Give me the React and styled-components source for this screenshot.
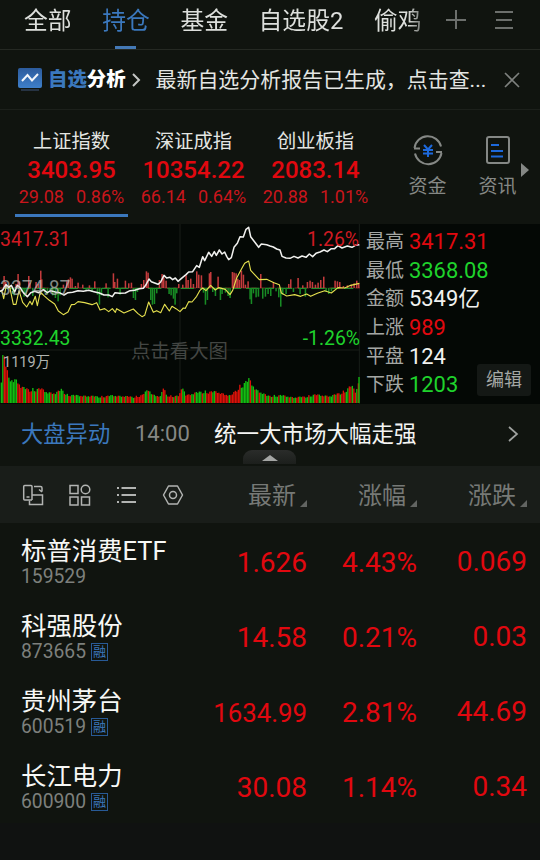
import React, { useState } from "react";
import styled, { createGlobalStyle } from "styled-components";

const RED = "#e1080f";
const GREEN = "#1fd32c";
const BLUE = "#3b78bd";

const GlobalStyle = createGlobalStyle`
  * {
    box-sizing: border-box;
  }
  body {
    margin: 0;
    background: #10140f;
    color: #e4e6e3;
    font-family: Roboto, "Noto Sans CJK SC", sans-serif;
  }
`;

const Page = styled.div`
  display: flex;
  flex-direction: column;
  width: 540px;
  height: 860px;
  overflow: hidden;
  background: #10140f;
`;

const TabBar = styled.div`
  display: flex;
  align-items: flex-start;
  height: 50px;
  padding-left: 24px;
  border-bottom: 1px solid #252923;
`;

const TabList = styled.div`
  display: flex;
  gap: 30.6px;
  width: 400px;
  height: 49px;
  mask-image: linear-gradient(to right, #000 384px, rgba(0, 0, 0, 0.5) 397px);
`;

const Tab = styled.div`
  display: flex;
  flex-direction: column;
  align-items: center;
  justify-content: space-between;
  flex: none;
  padding-top: 4px;
  font-size: 23.8px;
  line-height: 35px;
  color: ${(p) => (p.$active ? BLUE : "#dddfdc")};

  &::after {
    content: "";
    width: 21px;
    height: 3px;
    background: ${(p) => (p.$active ? "#4479b5" : "transparent")};
  }
`;

const TabIcons = styled.div`
  display: flex;
  gap: 28px;
  padding: 9px 0 0 22px;
`;

const Banner = styled.div`
  display: flex;
  align-items: center;
  height: 60px;
  padding: 0 19px 0 18px;
  border-bottom: 1px solid #1c201b;
`;

const BannerTitle = styled.div`
  margin: 0 5px 0 6px;
  font-size: 19.4px;
  font-weight: 900;
  line-height: 30px;
  color: #fff;

  span {
    color: ${BLUE};
  }
`;

const BannerText = styled.div`
  flex: 1;
  margin-left: 15px;
  font-size: 20.95px;
  line-height: 30px;
  white-space: nowrap;
`;

const IndexStrip = styled.div`
  display: flex;
  height: 114px;
  padding-left: 15px;
`;

const IndexCard = styled.div`
  display: flex;
  flex-direction: column;
  align-items: center;
  width: 113px;
  height: 107px;
  margin-right: 9px;
  padding-top: 18px;
  border-bottom: 3px solid ${(p) => (p.$active ? BLUE : "transparent")};
`;

const IndexName = styled.div`
  font-size: 19.3px;
  line-height: 28px;
`;

const IndexPrice = styled.div`
  font-size: 24px;
  font-weight: 500;
  line-height: 28px;
  color: ${RED};
`;

const IndexChange = styled.div`
  display: flex;
  gap: 12px;
  font-size: 18px;
  line-height: 26px;
  color: #c9161c;
`;

const Shortcut = styled.div`
  display: flex;
  flex-direction: column;
  align-items: center;
  flex: none;
  width: ${(p) => p.$width}px;
  padding-top: 23px;
  font-size: 19px;
  line-height: 39px;
  color: #858885;
  white-space: nowrap;
`;

const MoreArrow = styled.div`
  align-self: flex-start;
  margin-top: 53px;
  border: 7px solid transparent;
  border-right: 0;
  border-left: 8px solid #858885;
`;

const Market = styled.div`
  display: grid;
  grid-template-columns: 360px 1fr;
  height: 180px;
  background: #040805;
`;

const Chart = styled.div`
  position: relative;
  height: 180px;

  svg {
    display: block;
  }
`;

const ChartLabel = styled.span`
  position: absolute;
  top: ${(p) => p.$top}px;
  left: ${(p) => p.$left ?? "auto"};
  right: ${(p) => p.$right ?? "auto"};
  font-size: ${(p) => p.$size || 19.4}px;
  line-height: 24px;
  color: ${(p) => p.$color};
  white-space: nowrap;
`;

const Stats = styled.div`
  position: relative;
  display: flex;
  flex-direction: column;
  padding: 4px 0 0 6px;
`;

const Stat = styled.div`
  display: flex;
  align-items: center;
  gap: 5px;
  height: 28.6px;
  font-size: 19px;
  line-height: 26px;
  color: #a4a7a4;

  b {
    font-size: 21.9px;
    font-weight: 400;
    line-height: 28px;
    color: ${(p) => p.$color || "#f0f1ef"};
  }
`;

const EditButton = styled.button`
  position: absolute;
  right: 9px;
  bottom: 8px;
  width: 54px;
  height: 32px;
  padding: 0;
  border: 0;
  border-radius: 3px;
  background: #141815;
  color: #a4a7a4;
  font: 18px/30px Roboto, "Noto Sans CJK SC", sans-serif;
`;

const News = styled.div`
  position: relative;
  display: flex;
  align-items: center;
  height: 62px;
  padding: 0 21px 3px 21px;
  font-size: 22.5px;
  line-height: 32px;
`;

const NewsTopic = styled.span`
  width: 114px;
  font-size: 22.3px;
  color: ${BLUE};
`;

const NewsTime = styled.span`
  width: 79px;
  font-size: 22px;
  color: #858885;
`;

const NewsTitle = styled.span`
  flex: 1;
  color: #f4f5f3;
`;

const Handle = styled.div`
  position: absolute;
  bottom: 2px;
  left: 243px;
  display: flex;
  justify-content: center;
  width: 53px;
  height: 14px;
  padding-top: 5px;
  border-radius: 9px 9px 0 0;
  background: linear-gradient(#2a2c2a, #1c1f1c);

  &::after {
    content: "";
    height: 0;
    border: 8px solid transparent;
    border-top: 0;
    border-bottom: 6px solid #a4a6a4;
  }
`;

const TableHead = styled.div`
  display: flex;
  align-items: center;
  height: 57px;
  padding-left: 21px;
  background: #191d19;
`;

const ViewIcons = styled.div`
  display: flex;
  align-items: center;
  flex: none;
  gap: 22.5px;
  width: 227px;
`;

const SortHeader = styled.div`
  display: flex;
  align-items: center;
  flex: none;
  gap: 4px;
  width: 110px;
  padding-top: 3px;
  font-size: 24px;
  line-height: 34px;
  color: #767976;

  &::after {
    content: "";
    margin-top: 14px;
    border-left: 7px solid transparent;
    border-bottom: 7px solid #626562;
  }
`;

const Row = styled.div`
  display: grid;
  grid-template-columns: 165px 121px 110px 110px;
  height: 75px;
  padding: 8px 0 0 21px;
`;

const StockName = styled.div`
  padding-top: 1px;
  font-size: 25.4px;
  line-height: 38px;
  color: #f7f8f6;
  white-space: nowrap;
`;

const StockCode = styled.div`
  display: flex;
  align-items: center;
  gap: 5px;
  height: 20px;
  margin-top: -3px;
  font-size: 19.3px;
  line-height: 20px;
  color: #7d807d;
`;

const Badge = styled.span`
  width: 17px;
  height: 18px;
  border: 1px solid #285a96;
  font-size: 13px;
  line-height: 15px;
  text-align: center;
  color: ${BLUE};
`;

const Value = styled.div`
  padding-top: ${(p) => p.$top ?? 12}px;
  font-size: ${(p) => p.$size || 28}px;
  line-height: 40px;
  text-align: right;
  color: ${RED};
`;

const Footer = styled.div`
  flex: 1;
  background: #101211;
`;

const tabs = ["全部", "持仓", "基金", "自选股2", "偷鸡"];

const indexes = [
  { name: "上证指数", price: "3403.95", diff: "29.08", pct: "0.86%" },
  { name: "深证成指", price: "10354.22", diff: "66.14", pct: "0.64%" },
  { name: "创业板指", price: "2083.14", diff: "20.88", pct: "1.01%" },
];

const stats = [
  ["最高", "3417.31", RED],
  ["最低", "3368.08", GREEN],
  ["金额", "5349亿"],
  ["上涨", "989", RED],
  ["平盘", "124"],
  ["下跌", "1203", GREEN],
];

const stocks = [
  { name: "标普消费ETF", code: "159529", last: "1.626", pct: "4.43%", diff: "0.069" },
  { name: "科强股份", code: "873665", margin: true, last: "14.58", pct: "0.21%", diff: "0.03" },
  { name: "贵州茅台", code: "600519", margin: true, last: "1634.99", pct: "2.81%", diff: "44.69" },
  { name: "长江电力", code: "600900", margin: true, last: "30.08", pct: "1.14%", diff: "0.34" },
];

// Chart space is 1080 x 540, drawn at a third of that size
const priceLine =
  "0,208 8,204 18,188 26,196 34,190 44,210 52,190 60,196 70,212 82,224 92,212 104,208 116,212 130,203 142,212 152,206 166,210 178,212 192,219 204,212 218,211 234,206 250,208 266,205 282,209 298,213 312,219 326,219 337,224 345,212 358,214 376,213 390,206 404,205 418,200 430,199 437,190 447,171 454,179 464,183 474,187 482,180 492,160 500,168 510,166 518,173 526,168 534,178 548,166 558,158 566,150 578,149 590,131 598,136 608,104 614,116 626,91 635,103 643,89 649,100 658,84 666,96 674,90 680,103 686,113 694,107 702,76 712,64 720,44 730,45 738,22 746,16 752,44 764,60 776,76 784,66 800,68 810,72 820,75 830,81 840,84 846,103 858,108 870,109 882,103 894,108 906,102 918,106 928,96 938,104 948,94 960,90 972,84 982,89 994,80 1004,80 1014,71 1026,78 1042,72 1056,76 1066,70 1078,68";
const averageLine =
  "0,208 6,208 11,230 19,190 29,194 40,247 48,247 57,206 68,241 80,255 90,238 96,248 106,223 112,251 121,210 131,220 148,235 164,246 175,267 190,278 204,270 214,248 224,247 234,239 254,242 276,248 290,242 300,264 314,260 326,269 337,260 346,271 350,260 372,273 386,267 400,261 414,275 426,284 434,280 446,240 460,271 470,266 482,272 494,247 508,267 516,253 528,260 540,269 550,258 556,259 566,239 576,240 590,223 600,205 608,198 618,206 632,190 646,204 656,197 676,202 690,218 698,205 710,168 724,142 734,124 746,117 752,145 766,160 778,173 800,172 822,182 838,188 844,213 860,222 884,218 902,223 920,216 932,223 952,214 974,206 994,213 1014,197 1034,198 1052,190 1078,184";

// [x, offset from the zero line], up is positive
const momentum = [
  [12, 36], [17, 18], [28, 8], [38, -18], [42, -22], [48, 12], [54, 42], [58, 20], [66, -12], [72, -26], [78, -18],
  [86, 36], [90, 16], [98, -24], [108, 18], [115, 12], [122, 52], [125, 26], [134, -14], [142, -20], [150, -12], [158, -22],
  [166, -30], [174, -40], [180, -22], [190, 10], [200, 20], [205, 26], [211, 32], [216, 28], [226, 6], [234, 16], [248, 10],
  [258, -8], [268, 8], [276, -12], [284, 20], [292, -20], [298, -50], [304, -22], [318, 14], [324, -28], [340, 44], [344, 18],
  [352, 28], [360, -20], [376, 22], [386, 14], [394, 16], [400, -30], [406, -36], [412, -12], [424, 12], [431, 24],
  [439, 50], [444, 46], [452, -36], [457, -50], [463, -48], [470, -16], [478, 24], [486, 42], [491, 32], [498, 22], [507, -18],
  [513, -22], [520, -32], [525, -50], [530, -16], [536, 12], [548, 10], [558, 38], [564, 24], [572, 28], [580, 12],
  [590, 50], [596, 40], [604, 38], [610, -14], [616, -50], [622, -36], [628, 44], [632, 48], [638, -12], [646, -24], [654, 34],
  [661, -36], [666, -18], [676, -14], [684, -24], [690, -30], [697, 48], [702, 46], [708, 44], [713, 28], [718, 24], [724, 52],
  [730, 40], [736, 10], [744, 20], [750, -34], [754, -48], [760, -16], [768, -28], [775, -26], [782, 42], [788, -32], [796, -26],
  [804, -18], [812, -24], [820, 18], [828, -10], [836, -28], [842, -56], [848, -20], [858, -18], [866, 12], [872, 26],
  [880, -12], [894, 30], [900, -18], [908, 8], [916, -26], [922, 18], [930, 22], [937, 18], [946, 10], [954, 16], [962, 24],
  [971, 34], [978, -12], [986, -18], [994, -10], [1005, 22], [1012, 20], [1019, 18], [1030, 6], [1042, 8], [1054, 10], [1062, 14],
  [1070, 22], [1076, 14],
];

// Volume envelope as [x, height], filled in between below
const volumeShape = [
  [0, 45], [7, 156], [15, 120], [24, 74], [50, 70], [62, 48], [85, 42], [120, 44], [140, 33], [165, 30], [182, 42],
  [200, 26], [230, 23], [300, 20], [335, 23], [400, 19], [425, 25], [444, 42], [455, 26], [480, 20], [489, 50], [496, 26],
  [510, 22], [535, 22], [546, 50], [556, 24], [605, 36], [650, 34], [690, 22], [715, 50], [745, 72], [765, 42], [800, 22],
  [840, 24], [880, 17], [915, 20], [940, 26], [990, 21], [1030, 36], [1052, 54], [1066, 32], [1075, 78],
];
const volumeColors =
  "ggrrrggggggrrrrggrrrrggrgrrrrggggrgrggrgggrggrrggrgggrrgrggrrgrggggrrgrrgggrgrrggrrgrrrggrrrrrrrggrggrggrrggrrgrrr" +
  "rgrgrrrggrrrrggrggggrggrrrrggrrrrrrrrrgrrrrrrrggggggrggrggrgggrggrgrgggrgggrggrgrggrrggrrggrgggrrrggrrgrrgggrgrrgrrrggrrgrrgrgrg";

const volumeBars = Array.from({ length: 239 }, (_, i) => {
  const x = i * 4.5 + 2;
  const next = Math.max(1, volumeShape.findIndex((p) => p[0] > x));
  const [x0, h0] = volumeShape[next - 1];
  const [x1, h1] = volumeShape[next];
  const base = h0 + ((h1 - h0) * (x - x0)) / (x1 - x0);
  const jitter = 0.8 + ((i * i * 7 + i * 5) % 23) / 70;
  return { x, height: base * jitter, up: volumeColors[i % volumeColors.length] === "r" };
});
volumeBars.push({ x: 1075, height: 78, up: false });

function MarketChart() {
  return (
    <svg width="360" height="180" viewBox="0 6 1080 540" fill="none">
      <path d="M0 198H1080M0 384H1080M540 6V546M1078 6V546" stroke="#181d19" strokeWidth="3" />
      <path d="M0 198H1080" stroke="#6d211c" strokeWidth="3" strokeDasharray="16 10" />
      <path d="M12 199H1060" stroke="#238a2c" strokeWidth="4" strokeDasharray="26 14 40 18" />
      {momentum.map(([x, value]) => (
        <rect
          key={x}
          x={x - 2}
          y={value > 0 ? 198 - value : 198}
          width="4.6"
          height={Math.abs(value)}
          fill={value > 0 ? "#c33b3c" : "#188b24"}
        />
      ))}
      {volumeBars.map((bar) => (
        <rect
          key={bar.x}
          x={bar.x}
          y={543 - bar.height}
          width="4.1"
          height={bar.height}
          fill={bar.up ? "#dc1109" : "#13bd12"}
        />
      ))}
      <polyline points={averageLine} stroke="#e5e04f" strokeWidth="3.4" strokeLinejoin="round" />
      <polyline points={priceLine} stroke="#f0f0ee" strokeWidth="4.6" strokeLinejoin="round" />
    </svg>
  );
}

function LineIcon({ width, height = width, color = "#b2b4b2", stroke = 1.5, children }) {
  return (
    <svg
      width={width}
      height={height}
      viewBox={`0 0 ${width} ${height}`}
      fill="none"
      stroke={color}
      strokeWidth={stroke}
    >
      {children}
    </svg>
  );
}

function App() {
  const [activeTab, setActiveTab] = useState(1);
  const [activeIndex, setActiveIndex] = useState(0);

  return (
    <Page>
      <GlobalStyle />
      <TabBar>
        <TabList>
          {tabs.map((tab, i) => (
            <Tab key={tab} $active={i === activeTab} onClick={() => setActiveTab(i)}>
              {tab}
            </Tab>
          ))}
        </TabList>
        <TabIcons>
          <LineIcon width={20} height={22} color="#6c6f6c" stroke={2}>
            <path d="M10 1v19M0 11h20" />
          </LineIcon>
          <LineIcon width={20} height={22} color="#6c6f6c" stroke={2}>
            <path d="M1 3h18M2 11h16M1 19h18" />
          </LineIcon>
        </TabIcons>
      </TabBar>

      <Banner>
        <svg width="24" height="24" viewBox="0 0 24 24" fill="none">
          <defs>
            <linearGradient id="logo" x1="0" y1="0" x2="0" y2="1">
              <stop offset="0" stopColor="#2c5b9c" />
              <stop offset="1" stopColor="#3e7fca" />
            </linearGradient>
          </defs>
          <rect width="24" height="20" rx="2" fill="url(#logo)" />
          <path d="M4 13l5.500-6 4.500 5.500 6-6.500" stroke="#f1f5fa" strokeWidth="2" />
          <path d="M3 22h18" stroke="#263343" strokeWidth="2" />
        </svg>
        <BannerTitle>
          <span>自选</span>分析
        </BannerTitle>
        <LineIcon width={10} height={14} color="#c4c6c4" stroke={2}>
          <path d="M2 1l6 6-6 6" />
        </LineIcon>
        <BannerText>最新自选分析报告已生成，点击查...</BannerText>
        <LineIcon width={18} color="#7e817e" stroke={1.6}>
          <path d="M2 2l14 14M16 2L2 16" />
        </LineIcon>
      </Banner>

      <IndexStrip>
        {indexes.map((item, i) => (
          <IndexCard key={item.name} $active={i === activeIndex} onClick={() => setActiveIndex(i)}>
            <IndexName>{item.name}</IndexName>
            <IndexPrice>{item.price}</IndexPrice>
            <IndexChange>
              <span>{item.diff}</span>
              <span>{item.pct}</span>
            </IndexChange>
          </IndexCard>
        ))}
        <Shortcut $width={93}>
          <LineIcon width={30} height={34} color="#858885" stroke={2}>
            <path d="M1.500 15A13.500 13.500 0 0 1 28 13.500M28.500 20A13.500 13.500 0 0 1 2 20.500M1 15.500h6M23 19h6" />
            <path
              d="M11 12l4 4.500 4-4.500M15 16.500V24M10 17h10M10 20.500h10"
              stroke="#1d69dc"
            />
          </LineIcon>
          资金
        </Shortcut>
        <Shortcut $width={47}>
          <LineIcon width={26} height={34} color="#858885" stroke={2}>
            <rect x="2" y="4" width="22" height="26" rx="2" />
            <path d="M6 12h8M6 18h12M6 23.500h12" stroke="#1d69dc" />
          </LineIcon>
          资讯
        </Shortcut>
        <MoreArrow />
      </IndexStrip>

      <Market>
        <Chart>
          <MarketChart />
          <ChartLabel $top={4} $left="0" $color="#cf1a22">3417.31</ChartLabel>
          <ChartLabel $top={53} $left="0" $color="rgba(190, 193, 190, 0.7)">3374.87</ChartLabel>
          <ChartLabel $top={103} $left="0" $color={GREEN}>3332.43</ChartLabel>
          <ChartLabel $top={4} $right="1px" $color="#cf1a22">1.26%</ChartLabel>
          <ChartLabel $top={103} $right="0" $color={GREEN}>-1.26%</ChartLabel>
          <ChartLabel $top={127} $left="3px" $size={14.5} $color="#b0b3b0">1119万</ChartLabel>
          <ChartLabel $top={116} $left="131px" $size={19.4} $color="#434643">点击看大图</ChartLabel>
        </Chart>
        <Stats>
          {stats.map(([label, value, color]) => (
            <Stat key={label} $color={color}>
              {label}
              <b>{value}</b>
            </Stat>
          ))}
          <EditButton>编辑</EditButton>
        </Stats>
      </Market>

      <News>
        <NewsTopic>大盘异动</NewsTopic>
        <NewsTime>14:00</NewsTime>
        <NewsTitle>统一大市场大幅走强</NewsTitle>
        <LineIcon width={12} height={18} color="#a0a3a0" stroke={1.7}>
          <path d="M2 2l8 7-8 7" />
        </LineIcon>
        <Handle />
      </News>

      <TableHead>
        <ViewIcons>
          <LineIcon width={24}>
            <path d="M11 17V3.500a1 1 0 0 0-1-1H3.700a1 1 0 0 0-1 1V16a1 1 0 0 0 1 1H11M5.500 14h3" />
            <path d="M13 3.500h6.500a1.500 1.500 0 0 1 1.500 1.500v3.500M18 6.500l3 2.500M11 12h10.500v9.500H8.500V17.500" />
          </LineIcon>
          <LineIcon width={24}>
            <rect x="2" y="2.500" width="8" height="8" />
            <circle cx="17.500" cy="6.500" r="4.300" />
            <rect x="2" y="14" width="8" height="8" />
            <rect x="13.500" y="14" width="8" height="8" />
          </LineIcon>
          <LineIcon width={24} stroke={1.8}>
            <path d="M3 5h2M7.500 5h14.500M3 12h2M7.500 12h14.500M3 19h2M7.500 19h14.500" />
          </LineIcon>
          <LineIcon width={24}>
            <path d="M7.500 3h9l5 9-5 9h-9l-5-9z" strokeLinejoin="round" />
            <circle cx="12" cy="12" r="3.500" />
          </LineIcon>
        </ViewIcons>
        <SortHeader>最新</SortHeader>
        <SortHeader>涨幅</SortHeader>
        <SortHeader>涨跌</SortHeader>
      </TableHead>

      {stocks.map((stock) => (
        <Row key={stock.code}>
          <div>
            <StockName>{stock.name}</StockName>
            <StockCode>
              {stock.code}
              {stock.margin && <Badge>融</Badge>}
            </StockCode>
          </div>
          <Value $size={stock.last.length > 6 ? 25.8 : 28}>{stock.last}</Value>
          <Value>{stock.pct}</Value>
          <Value $top={11}>{stock.diff}</Value>
        </Row>
      ))}
      <Footer />
    </Page>
  );
}

export default App;
